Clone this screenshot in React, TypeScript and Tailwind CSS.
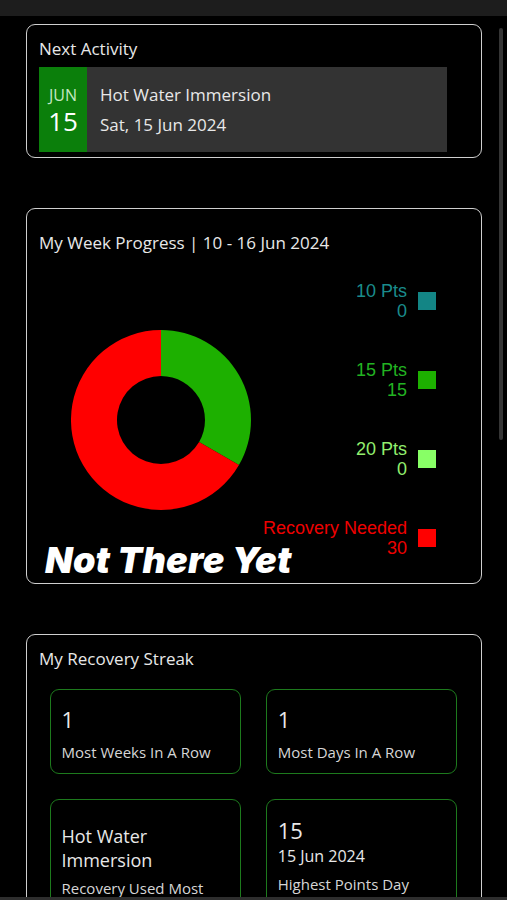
import React from 'react';

const legend = [
  { label: '10 Pts', value: '0', text: 'text-[#1a8c8c]', box: 'bg-[#138585]' },
  { label: '15 Pts', value: '15', text: 'text-[#22b322]', box: 'bg-[#1db000]' },
  { label: '20 Pts', value: '0', text: 'text-[#92ee6e]', box: 'bg-[#88ff66]' },
  { label: 'Recovery Needed', value: '30', text: 'text-[#ee0000]', box: 'bg-[#ff0000]' },
];

const Card = ({ children, className = '' }: { children: React.ReactNode; className?: string }) => (
  <section className={`w-[456px] rounded-[9px] border-[1.5px] border-[#cfcfcf] bg-black ${className}`}>
    {children}
  </section>
);

const Donut = () => (
  <svg width="180" height="180" viewBox="0 0 180 180">
    <path d="M90 0 A90 90 0 0 1 167.94 135 L128.1 112 A44 44 0 0 0 90 46 Z" fill="#1db000" />
    <path d="M167.94 135 A90 90 0 1 1 90 0 L90 46 A44 44 0 1 0 128.1 112 Z" fill="#ff0000" />
  </svg>
);

const StreakBox = ({ children, className = '' }: { children: React.ReactNode; className?: string }) => (
  <div className={`rounded-[9px] border border-[#1d7a1d] pl-[11px] pr-2 ${className}`}>{children}</div>
);

export default function App() {
  return (
    <div
      className="relative flex h-[900px] w-[507px] flex-col overflow-hidden bg-black text-[#e8e8e8]"
      style={{ fontFamily: '"Open Sans", "Noto Sans", sans-serif' }}
    >
      <div className="h-4 shrink-0 bg-[#1d1d1d]" />

      <div className="flex flex-1">
        <main className="flex shrink-0 flex-col gap-[50px] pl-[26px] pt-2">
          {/* Next activity */}
          <Card className="px-3 pt-3 pb-[5px]">
            <h3 className="text-[17px] leading-6">Next Activity</h3>
            <div className="mt-1.5 flex h-[85px] w-[408px] bg-[#333333]">
              <div className="flex w-12 flex-col items-center justify-center bg-[#0b7f0b] pt-0.5">
                <span className="text-[16px] leading-5 text-[#c4e8c4]">JUN</span>
                <span className="text-[26px] leading-8 text-white">15</span>
              </div>
              <div className="flex flex-col justify-center gap-1.5 pl-[13px]">
                <span className="text-[17px] leading-6">Hot Water Immersion</span>
                <span className="text-[17px] leading-6">Sat, 15 Jun 2024</span>
              </div>
            </div>
          </Card>

          {/* Week progress */}
          <Card className="px-3 pt-[22px] pb-[2.5px]">
            <h3 className="text-[17px] leading-6">My Week Progress | 10 - 16 Jun 2024</h3>
            <div className="mt-[26px] flex items-center justify-between pl-8 pr-[33px]">
              <Donut />
              <div
                className="flex flex-col items-end gap-[39px]"
                style={{ fontFamily: '"Liberation Sans", Arial, sans-serif' }}
              >
                {legend.map((l) => (
                  <div key={l.label} className="flex items-center gap-[11px]">
                    <div className={`flex flex-col items-end text-[18px] leading-5 ${l.text}`}>
                      <span>{l.label}</span>
                      <span>{l.value}</span>
                    </div>
                    <div className={`h-[18px] w-[18px] ${l.box}`} />
                  </div>
                ))}
              </div>
            </div>
            <p
              className="-mt-[18px] pl-[6px] text-[36px] font-black italic leading-10 tracking-[0.2px] text-white"
              style={{ fontFamily: 'Inter, "Liberation Sans", sans-serif' }}
            >
              Not There Yet
            </p>
          </Card>

          {/* Recovery streak */}
          <Card className="h-[300px] pt-3">
            <h3 className="px-3 text-[17px] leading-6">My Recovery Streak</h3>
            <div className="mt-[18px] grid grid-cols-2 gap-x-[25px] gap-y-[25px] pl-[22.5px] pr-6">
              <StreakBox className="h-[85px] pt-[15px]">
                <div className="text-[22px] leading-7">1</div>
                <div className="mt-[9px] text-[15px] leading-5 text-[#d6d6d6]">Most Weeks In A Row</div>
              </StreakBox>
              <StreakBox className="h-[85px] pt-[15px]">
                <div className="text-[22px] leading-7">1</div>
                <div className="mt-[9px] text-[15px] leading-5 text-[#d6d6d6]">Most Days In A Row</div>
              </StreakBox>
              <StreakBox className="h-[120px] pt-6">
                <div className="text-[18px] leading-6">Hot Water</div>
                <div className="text-[18px] leading-6">Immersion</div>
                <div className="mt-1.5 text-[15px] leading-5 text-[#d6d6d6]">Recovery Used Most</div>
              </StreakBox>
              <StreakBox className="h-[120px] pt-4">
                <div className="text-[22px] leading-7">15</div>
                <div className="text-[16px] leading-6">15 Jun 2024</div>
                <div className="mt-1.5 text-[15px] leading-5 text-[#d6d6d6]">Highest Points Day</div>
              </StreakBox>
            </div>
          </Card>
        </main>

        {/* scrollbar */}
        <div className="ml-[17px] pt-3">
          <div className="h-[412px] w-1 rounded-full bg-[#353535]" />
        </div>
      </div>

      <div className="absolute inset-x-0 bottom-0 h-[3px] bg-[#2e2e2e]" />
    </div>
  );
}
